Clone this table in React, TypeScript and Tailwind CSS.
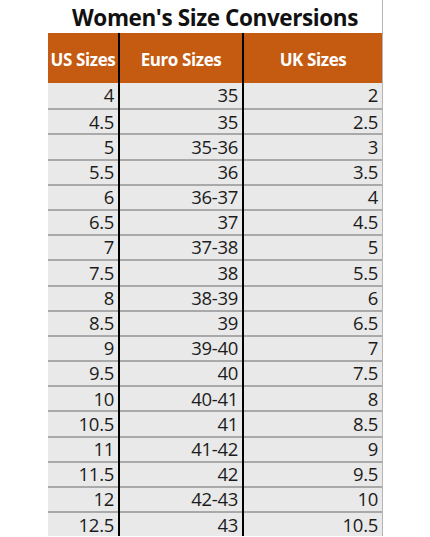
const rows: [string, string, string][] = [
  ['4', '35', '2'],
  ['4.5', '35', '2.5'],
  ['5', '35-36', '3'],
  ['5.5', '36', '3.5'],
  ['6', '36-37', '4'],
  ['6.5', '37', '4.5'],
  ['7', '37-38', '5'],
  ['7.5', '38', '5.5'],
  ['8', '38-39', '6'],
  ['8.5', '39', '6.5'],
  ['9', '39-40', '7'],
  ['9.5', '40', '7.5'],
  ['10', '40-41', '8'],
  ['10.5', '41', '8.5'],
  ['11', '41-42', '9'],
  ['11.5', '42', '9.5'],
  ['12', '42-43', '10'],
  ['12.5', '43', '10.5'],
];

const columns = [
  { title: 'US Sizes', width: 'w-[72px]', border: 'border-r-2 border-black' },
  { title: 'Euro Sizes', width: 'w-[124px]', border: 'border-r-2 border-black' },
  { title: 'UK Sizes', width: 'w-[139px]', border: 'border-r border-[#b5b5b5]' },
];

export default function App() {
  return (
    <div className="w-[430px] h-[537px] bg-white overflow-hidden" style={{ fontFamily: "'Open Sans', 'Noto Sans', sans-serif" }}>
      <div className="ml-[48px] w-[335px]">
        <div className="h-[33px] flex items-center justify-center border-r border-[#b5b5b5]">
          <h1 className="text-[22.5px] font-bold tracking-[-0.4px] text-[#111] leading-none pt-[3px]">
            Women's Size Conversions
          </h1>
        </div>

        <div className="flex">
          {columns.map((col, ci) => (
            <div key={col.title} className={`${col.width} ${col.border} shrink-0`}>
              <div className="h-[50px] bg-[#c55a11] flex items-center justify-center pt-[4px]">
                <span className="text-white font-bold text-[17px] tracking-[-0.4px]">{col.title}</span>
              </div>
              {rows.map((r, ri) => (
                <div
                  key={ri}
                  className={`h-[25.2px] bg-[#e9e9e9] flex items-center justify-end pr-[4px] text-[18.5px] tracking-[-0.3px] text-[#1c1c1c] leading-none ${
                    ri > 0 ? 'border-t-2 border-[#a9a9a9]' : ''
                  }`}
                >
                  {r[ci]}
                </div>
              ))}
            </div>
          ))}
        </div>
      </div>
    </div>
  );
}
